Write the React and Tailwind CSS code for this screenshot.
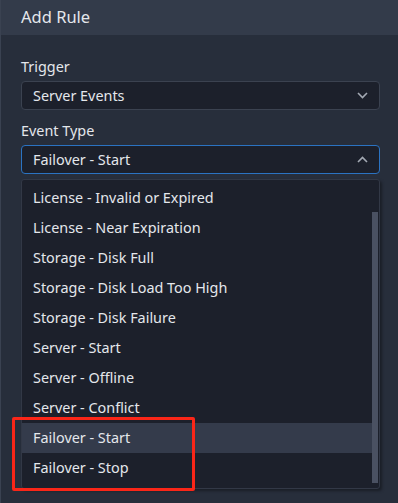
import React from "react";

const items = [
  "License - Invalid or Expired",
  "License - Near Expiration",
  "Storage - Disk Full",
  "Storage - Disk Load Too High",
  "Storage - Disk Failure",
  "Server - Start",
  "Server - Offline",
  "Server - Conflict",
  "Failover - Start",
  "Failover - Stop",
];

function Chevron({ up }) {
  return (
    <svg width="11" height="7" viewBox="0 0 11 7" className="shrink-0">
      <polyline
        points={up ? "1,6 5.5,1.5 10,6" : "1,1 5.5,5.5 10,1"}
        fill="none"
        stroke="#a3a9b3"
        strokeWidth="1.6"
      />
    </svg>
  );
}

export default function App() {
  return (
    <div
      className="relative w-[398px] h-[503px] overflow-hidden bg-[#272e3b] border-l border-[#3a4251] text-[#e4e7ec] flex flex-col"
      style={{ fontFamily: '"Noto Sans", "Open Sans", sans-serif' }}
    >
      <div className="h-[35px] shrink-0 bg-[#333b4a] flex items-center px-[20px] text-[16.5px] leading-none">
        Add Rule
      </div>
      <div className="flex flex-col pl-[20px] pr-[18px] pt-[22px]">
        <div className="text-[14.4px] leading-[20px]">Trigger</div>
        <div className="mt-[4px] h-[29px] rounded-[4px] border border-[#3b4250] bg-[#1c202b] flex items-center justify-between pl-[11px] pr-[11px] text-[14.4px]">
          <span>Server Events</span>
          <Chevron />
        </div>
        <div className="mt-[11px] text-[14.4px] leading-[20px]">Event Type</div>
        <div className="mt-[4px] h-[29px] rounded-[4px] border border-[#2b73c2] bg-[#1c202b] flex items-center justify-between pl-[11px] pr-[11px] text-[14.4px]">
          <span>Failover - Start</span>
          <Chevron up />
        </div>
        <div className="relative mt-[5px] h-[310px] rounded-[3px] border border-[#323846] bg-[#1c202b] shadow-[2px_2px_3px_rgba(0,0,0,0.35)] pt-[3px] pb-[5px] flex">
          <div className="flex-1 flex flex-col">
            {items.map((t) => (
              <div
                key={t}
                className={
                  "h-[30px] flex items-center pl-[11px] text-[14.4px] " +
                  (t === "Failover - Start" ? "bg-[#343b4b]" : "")
                }
              >
                {t}
              </div>
            ))}
          </div>
          <div className="w-[6px] mr-[1px] flex flex-col">
            <div className="mt-[29px] flex-1 bg-[#4a5162]" />
          </div>
        </div>
      </div>
      <div className="absolute left-[11px] top-[417px] w-[183px] h-[74px] border-[3px] border-[#fa2618] rounded-[2px]" />
    </div>
  );
}
